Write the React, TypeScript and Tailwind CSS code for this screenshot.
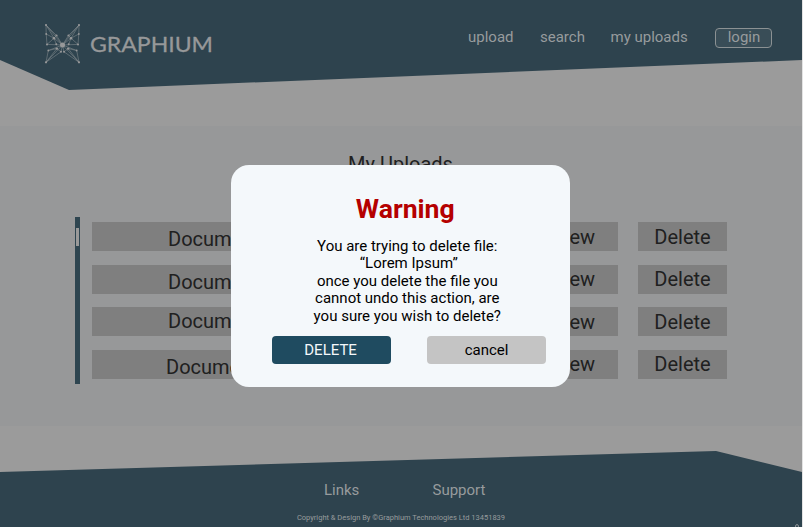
import React from 'react';

const rows = [
  { id: 1, label: 'pl-[76px] pt-[5px]' },
  { id: 2, label: 'pl-[76px] pt-[5px]' },
  { id: 3, label: 'pl-[76px] pt-[2px]' },
  { id: 4, label: 'pl-[74px] pt-[5px]' },
];

const nodes: [number, number, number][] = [
  [2, 2, 1.1], [35, 2, 1.1], [2, 39.3, 1.1], [35, 39.3, 1.1],
  [2.2, 11, 0.9], [34.8, 11, 0.9], [3, 21.4, 1], [34, 21.4, 1],
  [4.3, 27.5, 0.9], [32.7, 27.5, 0.9], [10, 15.2, 1.3], [27, 15.2, 1.3],
  [12.5, 12.5, 1.1], [24.5, 12.5, 1.1], [12.3, 21.3, 1], [24.7, 21.3, 1],
  [12.8, 25.6, 1.2], [24.2, 25.6, 1.2], [17, 28.8, 1], [20, 28.8, 1],
];

function Butterfly() {
  return (
    <svg className="h-[41px] w-[37px] shrink-0" viewBox="0 0 37 41" fill="none">
      <g stroke="#8f9497" strokeWidth="0.5">
        <path d="M2 2 2.2 11 3 21.4 18.5 22 2 2 12.5 12.5 18.5 22 10 15.2 2.2 11M10 15.2 3 21.4M10 15.2 12.3 21.3M2 2 10 15.2M12.5 12.5 10 15.2M18.5 22 4.3 27.5 2 39.3 18.5 22M4.3 27.5 12.8 25.6 2 39.3 17 28.8 18.5 22M12.8 25.6 17 28.8" />
        <path d="M35 2 34.8 11 34 21.4 18.5 22 35 2 24.5 12.5 18.5 22 27 15.2 34.8 11M27 15.2 34 21.4M27 15.2 24.7 21.3M35 2 27 15.2M24.5 12.5 27 15.2M18.5 22 32.7 27.5 35 39.3 18.5 22M32.7 27.5 24.2 25.6 35 39.3 20 28.8 18.5 22M24.2 25.6 20 28.8" />
      </g>
      <g fill="#979899">
        {nodes.map(([x, y, r]) => (
          <circle key={`${x}-${y}`} cx={x} cy={y} r={r} />
        ))}
        <circle cx="18.5" cy="22" r="2.5" />
      </g>
    </svg>
  );
}

export default function App() {
  return (
    <div className="relative h-[527px] w-[803px] overflow-hidden border-r border-[#e3e3e3] bg-[#9b9b9b] font-['Roboto',sans-serif] text-[#202020]">
      <div className="flex h-full flex-col">
        <header className="flex h-[90px] shrink-0 items-start bg-[#2e434e] pl-[44px] pt-[23px] text-[#979b9d] [clip-path:polygon(0_0,100%_0,100%_60px,69px_90px,0_60px)]">
          <Butterfly />
          <svg className="ml-[8px] mt-[5px] h-[32px] w-[128px] shrink-0" viewBox="0 0 128 32">
            <text x="1" y="23.7" textLength="123" lengthAdjust="spacingAndGlyphs" strokeWidth="0.3" className="fill-[#979899] stroke-[#979899] font-['Lato',sans-serif] text-[21.8px]">GRAPHIUM</text>
          </svg>
          <nav className="ml-[251px] mt-[5px] flex whitespace-nowrap text-[15px] leading-[18px]">
            <a className="w-[72px]">upload</a>
            <a className="w-[70.5px]">search</a>
            <a className="w-[104.5px]">my uploads</a>
            <a className="h-[20px] w-[57px] rounded-[4px] border border-[#8b9193] bg-[#394d57] pl-px text-center leading-[17px]">login</a>
          </nav>
        </header>

        <main className="mt-[36px] h-[299.5px] shrink-0 bg-[#979899] pt-[26px]">
          <h1 className="pr-px text-center text-[20px] leading-[24px]">My Uploads</h1>
          <div className="mt-[41px] flex pl-[75px]">
            <div className="h-[167px] w-[5px] bg-[#2e4550] pl-px pt-[11px]">
              <div className="h-[18px] w-[3px] bg-[#999]" />
            </div>
            <ul className="ml-[12px] mt-[5px] flex flex-col gap-[13.6px] text-[20px] leading-[24px]">
              {rows.map((row) => (
                <li key={row.id} className="flex h-[29px]">
                  <div className={`w-[418px] bg-[#7f7f7f] ${row.label}`}>Document</div>
                  <button className="ml-[19px] w-[89px] bg-[#7f7f7f]">View</button>
                  <button className="ml-[20px] w-[89px] bg-[#7f7f7f]">Delete</button>
                </li>
              ))}
            </ul>
          </div>
        </main>

        <footer className="mt-auto h-[76px] shrink-0 bg-[#2e434e] pt-[29px] text-[#979b9d] [clip-path:polygon(0_21px,716px_0,100%_21px,100%_100%,0_100%)]">
          <div className="flex pl-[324px] text-[15px] leading-[20px]">
            <a className="w-[108.5px]">Links</a>
            <a>Support</a>
          </div>
          <p className="mt-[13px] text-center text-[7.5px] leading-[10px]">Copyright &amp; Design By ©Graphium Technologies Ltd 13451839</p>
        </footer>
      </div>

      <svg className="absolute bottom-0 right-[3px] h-[3px] w-[4px]" viewBox="0 0 4 3" fill="none">
        <path d="M0.6 3V2Q0.6 0.6 2 0.6T3.4 2V3" stroke="#8f9497" />
      </svg>

      <div role="dialog" className="absolute left-[231.4px] top-[165.4px] flex h-[221.4px] w-[338.8px] flex-col items-center rounded-[18px] bg-[#f4f8fb] text-black">
        <h2 className="mt-[27.6px] pl-[9px] text-[26.6px] font-bold leading-[32px] text-[#b50000]">Warning</h2>
        <p className="mt-[12.6px] whitespace-nowrap pl-[13px] text-center text-[15px] leading-[17.6px]">
          You are trying to delete file:<br />
          <span className="pl-[3px]">“Lorem Ipsum”</span><br />
          once you delete the file you<br />
          cannot undo this action, are<br />
          you sure you wish to delete?
        </p>
        <div className="mt-[10.4px] flex gap-[36px] pl-[16.6px] text-[15px]">
          <button className="h-[28px] w-[119px] rounded-[4px] bg-[#1f4b60] pr-[2px] text-[#f4f8fb]">DELETE</button>
          <button className="h-[28px] w-[119px] rounded-[4px] bg-[#c4c4c4]">cancel</button>
        </div>
      </div>
    </div>
  );
}
